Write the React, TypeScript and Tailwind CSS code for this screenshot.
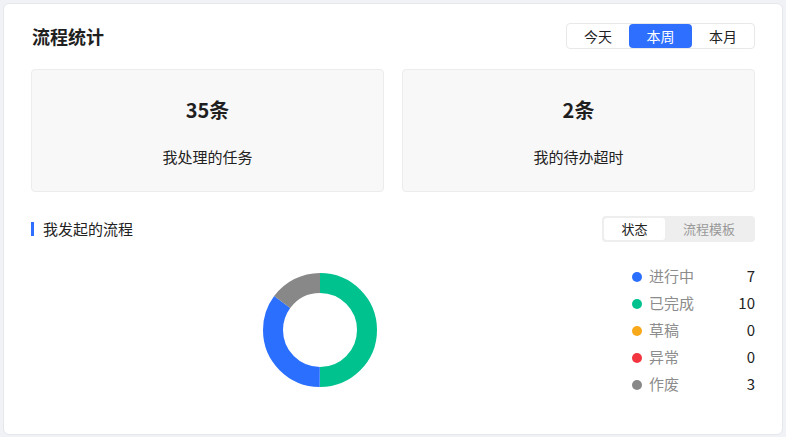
import React, { useState } from 'react';

const legend = [
  { label: '进行中', value: 7, color: '#2b6fff' },
  { label: '已完成', value: 10, color: '#00c28f' },
  { label: '草稿', value: 0, color: '#f7a81b' },
  { label: '异常', value: 0, color: '#f2353f' },
  { label: '作废', value: 3, color: '#888888' },
];

function Donut() {
  const r = 47;
  const c = 2 * Math.PI * r;
  // drawn clockwise from the top: 已完成, 进行中, 作废
  const segs = [
    { value: 10, color: '#00c28f' },
    { value: 7, color: '#2b6fff' },
    { value: 3, color: '#888888' },
  ];
  const total = segs.reduce((s, x) => s + x.value, 0);
  let offset = 0;
  return (
    <svg width="114" height="114" viewBox="0 0 114 114">
      <g transform="rotate(-90 57 57)">
        {segs.map((s, i) => {
          const len = (s.value / total) * c;
          const el = (
            <circle
              key={i}
              cx="57"
              cy="57"
              r={r}
              fill="none"
              stroke={s.color}
              strokeWidth="20"
              strokeDasharray={`${len} ${c - len}`}
              strokeDashoffset={-offset}
            />
          );
          offset += len;
          return el;
        })}
      </g>
    </svg>
  );
}

export default function App() {
  const [range, setRange] = useState('week');
  const [tab, setTab] = useState('status');

  const ranges = [
    { key: 'today', label: '今天', w: 'w-[62px]' },
    { key: 'week', label: '本周', w: 'w-[63px]' },
    { key: 'month', label: '本月', w: 'w-[62px]' },
  ];

  return (
    <div
      className="w-[786px] h-[437px] bg-[#f0f2f5] pt-[3px] pl-[3px] pr-[3px] pb-[2px]"
      style={{ fontFamily: '"Noto Sans CJK SC", "Noto Sans", sans-serif' }}
    >
      <div className="h-full bg-white border border-[#e4e7ec] rounded-md px-[27px] pt-[19px]">
        {/* Header */}
        <div className="flex items-center justify-between h-[26px]">
          <h1 className="text-[18px] font-bold text-[#1f1f1f] leading-[26px] pl-[1px]">流程统计</h1>
          <div className="flex h-[26px] border border-[#e8e8e8] rounded-[4px] overflow-hidden text-[14px]">
            {ranges.map((r) => (
              <button
                key={r.key}
                onClick={() => setRange(r.key)}
                className={`${r.w} leading-[24px] rounded-[4px] ${
                  range === r.key ? 'bg-[#2f6fff] text-white' : 'text-[#222]'
                }`}
              >
                {r.label}
              </button>
            ))}
          </div>
        </div>

        {/* Stat cards */}
        <div className="grid grid-cols-2 gap-[18px] mt-[20px]">
          {[
            { num: '35条', label: '我处理的任务' },
            { num: '2条', label: '我的待办超时' },
          ].map((s) => (
            <div
              key={s.label}
              className="h-[123px] bg-[#f8f8f8] border border-[#ececec] rounded-[4px] flex flex-col items-center pt-[27px]"
            >
              <div className="text-[20px] font-bold leading-[26px] text-[#1f1f1f]">{s.num}</div>
              <div className="text-[15px] leading-[20px] text-[#222] mt-[24px]">{s.label}</div>
            </div>
          ))}
        </div>

        {/* Section header */}
        <div className="flex items-center justify-between h-[26px] mt-[24px]">
          <div className="flex items-center">
            <span className="w-[3px] h-[14px] bg-[#2f6fff]" />
            <span className="ml-[9px] text-[15px] text-[#222]">我发起的流程</span>
          </div>
          <div className="flex w-[153px] h-[26px] bg-[#eeeeee] rounded-[4px] p-[2px] text-[13px]">
            <button
              onClick={() => setTab('status')}
              className={`w-[61px] rounded-[3px] ${tab === 'status' ? 'bg-white text-[#222]' : 'text-[#999]'}`}
            >
              状态
            </button>
            <button
              onClick={() => setTab('template')}
              className={`flex-1 rounded-[3px] ${tab === 'template' ? 'bg-white text-[#222]' : 'text-[#999]'}`}
            >
              流程模板
            </button>
          </div>
        </div>

        {/* Chart + legend */}
        <div className="flex">
          <div className="w-[578px] flex justify-center pt-[31px]">
            <Donut />
          </div>
          <div className="flex-1 pt-[21px] pl-[23px]">
            {legend.map((l) => (
              <div key={l.label} className="flex items-center h-[27px]">
                <span className="w-[10px] h-[10px] rounded-full" style={{ backgroundColor: l.color }} />
                <span className="ml-[7px] text-[15px] text-[#8c8c8c]">{l.label}</span>
                <span className="ml-auto text-[15px] text-[#222]">{l.value}</span>
              </div>
            ))}
          </div>
        </div>
      </div>
    </div>
  );
}
